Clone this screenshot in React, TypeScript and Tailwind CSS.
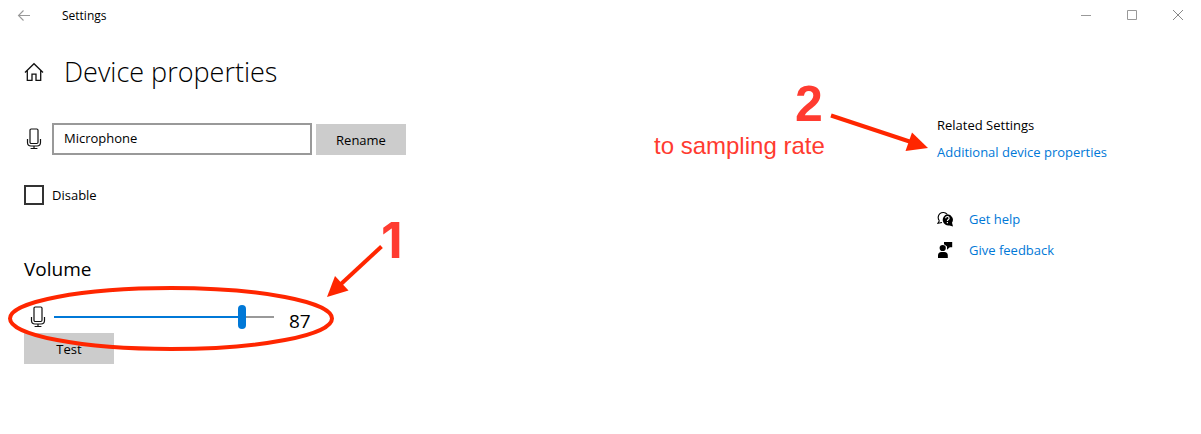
import { useState } from "react";

function MicIcon() {
  return (
    <svg width="16" height="22" viewBox="0 0 16 22" fill="none" stroke="#111" strokeWidth="1.2" aria-hidden="true" className="shrink-0">
      <rect x="4" y="1" width="8" height="14.500" rx="1.2" />
      <path d="M1.500 11v3.500q0 3.500 3.500 3.500h6q3.500 0 3.500-3.500V11M8 18v2.500M4.600 20.500h6.800" />
    </svg>
  );
}

function TitleBar() {
  return (
    <header className="flex h-8 items-center">
      <button aria-label="Back" className="flex h-8 w-12 items-center justify-center">
        <svg width="14" height="12" viewBox="0 0 14 12" fill="none" stroke="#999" strokeWidth="1.1">
          <path d="M13 5.500H1.500M6.500.5l-5 5l5 5" />
        </svg>
      </button>
      <span className="ml-[14px] text-xs leading-4">Settings</span>
      <div className="ml-auto flex">
        <button aria-label="Minimize" className="flex h-8 w-[46px] items-center justify-center">
          <svg width="10" height="10" viewBox="0 0 10 10" stroke="#999"><path d="M0 4.500h10" /></svg>
        </button>
        <button aria-label="Maximize" className="flex h-[30px] w-[46px] items-center justify-center">
          <svg width="10" height="10" viewBox="0 0 10 10" fill="none" stroke="#999"><path d="M.5.5h9v9h-9z" /></svg>
        </button>
        <button aria-label="Close" className="flex h-[30px] w-[46px] items-center justify-center">
          <svg width="10" height="10" viewBox="0 0 10 10" stroke="#888"><path d="M0 0l10 10M10 0L0 10" /></svg>
        </button>
      </div>
    </header>
  );
}

function VolumeSection() {
  const [volume, setVolume] = useState(87);
  const stop = `${volume}%`;
  return (
    <section className="relative mt-[50px]">
      <h2 className="text-[19px] leading-7">
        <label htmlFor="volume">Volume</label>
      </h2>
      <div className="mt-[22px] flex h-6 items-center pl-[6px]">
        <MicIcon />
        <input
          id="volume"
          type="range"
          min={0}
          max={100}
          value={volume}
          onChange={(e) => setVolume(Number(e.target.value))}
          style={{ backgroundImage: `linear-gradient(to right, #0078d7 ${stop}, #999 ${stop})` }}
          className="ml-2 h-[2px] w-[220px] appearance-none [&::-webkit-slider-thumb]:h-6 [&::-webkit-slider-thumb]:w-2 [&::-webkit-slider-thumb]:appearance-none [&::-webkit-slider-thumb]:rounded-full [&::-webkit-slider-thumb]:bg-[#0078d7]"
        />
        <output htmlFor="volume" className="ml-[15px] pt-2 text-[19px] leading-6">{volume}</output>
      </div>
      <button className="mt-1 block h-[31px] w-[90px] bg-[#ccc] text-[13px] leading-5">Test</button>

      <svg width="400" height="140" viewBox="8 215 400 140" fill="none" className="pointer-events-none absolute -top-10 -left-4 max-w-none" aria-hidden="true">
        <ellipse cx="171" cy="318.500" rx="161" ry="30.500" stroke="#ff2600" strokeWidth="4" />
        <path d="M381.500 246.500L341 284" stroke="#ff2600" strokeWidth="4" />
        <path d="M327 297L335 276L348.500 290.500z" fill="#ff2600" />
      </svg>
      <span className="pointer-events-none absolute top-[-40px] left-[357px] font-[Inter,Helvetica,sans-serif] text-[50px] leading-[50px] font-bold text-[#ff3b30]">1</span>
    </section>
  );
}

function RelatedSettings() {
  return (
    <aside className="relative mt-[83px] w-[264px] shrink-0 text-[13px] leading-5">
      <h2>Related Settings</h2>
      <a href="#properties" className="mt-[7px] block text-[#0078d7]">Additional device properties</a>
      <a href="#help" className="mt-[47px] flex items-center gap-4 text-[#0078d7]">
        <svg width="16" height="16" viewBox="0 0 16 16" aria-hidden="true">
          <path d="M2.400 9.800A5 5 0 1 1 10 3.200M2.400 9.800L.9 12.300L5 11.500" fill="none" stroke="#000" strokeWidth="1.100" />
          <path d="M10.300 3.300a5.500 5.500 0 0 1 4.700 8.500l1 3.600-3.500-1a5.600 5.600 0 1 1-2.200-11.100z" fill="#000" />
          <path d="M8.700 7.200c0-2.300 3.400-2.200 3.400 0 0 1.300-1.700 1.300-1.700 2.700M10.400 11v1.200" fill="none" stroke="#fff" strokeWidth="1.200" />
        </svg>
        Get help
      </a>
      <a href="#feedback" className="mt-[11px] flex items-center gap-4 text-[#0078d7]">
        <svg width="16" height="16" viewBox="0 0 16 16" aria-hidden="true">
          <circle cx="5.700" cy="6" r="3.100" />
          <path d="M1 16v-2.500q0-3.500 3.500-3.500h2.800q3.500 0 3.500 3.500V16zM7 0h8.200v5.200h-2.400L10 7.800V4.600L7 2.200z" />
        </svg>
        Give feedback
      </a>

      <svg width="100" height="50" viewBox="830 110 100 50" fill="none" className="pointer-events-none absolute top-[-5px] left-[-107px] max-w-none" aria-hidden="true">
        <path d="M831 115.500L911 142" stroke="#ff2600" strokeWidth="4" />
        <path d="M928 148L912 132.500L905.500 151z" fill="#ff2600" />
      </svg>
      <div className="pointer-events-none absolute top-[-37px] left-[-283px] font-['Liberation_Sans',Arial,sans-serif] whitespace-nowrap">
        <p className="pl-[141px] text-[50px] leading-[52px] font-bold text-[#ff3b30]">2</p>
        <p className="text-2xl text-[#ff3b30]">to sampling rate</p>
      </div>
    </aside>
  );
}

export default function App() {
  return (
    <div className="min-h-screen bg-white font-['Open_Sans','Noto_Sans',sans-serif] text-black">
      <TitleBar />
      <div className="flex justify-between pl-6">
        <main className="pt-5 pb-8 text-[13px] leading-5">
          <div className="flex h-10 items-center">
            <svg width="20" height="20" viewBox="0 0 20 20" fill="none" stroke="#111" strokeWidth="1.300" aria-hidden="true">
              <path d="M1 10.500L10 1.700l9 8.800M3.300 8.500v9.900H8v-6.200h4v6.200h4.700V8.500" />
            </svg>
            <h1 className="ml-5 text-[27px] leading-10 font-light">Device properties</h1>
          </div>
          <form className="mt-[31px]" onSubmit={(e) => e.preventDefault()}>
            <div className="flex items-end">
              <div className="flex h-8 w-7 items-center pl-[2px]">
                <MicIcon />
              </div>
              <input
                aria-label="Device name"
                defaultValue="Microphone"
                className="h-8 w-[260px] border-2 border-[#999] px-[10px] pb-[2px] outline-none"
              />
              <button className="ml-1 h-[31px] w-[90px] bg-[#ccc]">Rename</button>
            </div>
            <div className="mt-[30px] flex h-5 items-center gap-2">
              <input id="disable" type="checkbox" className="size-5 appearance-none border-2 border-[#333] bg-white checked:bg-[#0078d7]" />
              <label htmlFor="disable">Disable</label>
            </div>
          </form>
          <VolumeSection />
        </main>
        <RelatedSettings />
      </div>
    </div>
  );
}
